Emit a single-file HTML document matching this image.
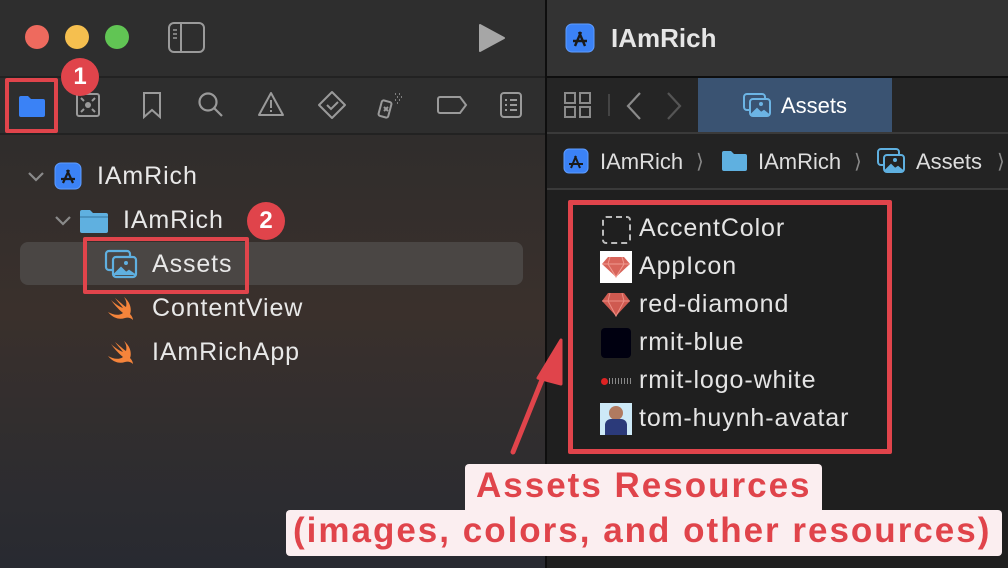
<!DOCTYPE html>
<html><head><meta charset="utf-8"><style>
*{margin:0;padding:0;box-sizing:border-box}
body{width:1008px;height:568px;overflow:hidden;position:relative;font-family:"Liberation Sans",sans-serif;background:#1f1f1f}
.abs{position:absolute}
#left{left:0;top:0;width:545px;height:568px;background:linear-gradient(180deg,#2f2e2e 0%,#302d2c 25%,#3a302c 55%,#2f2d2f 80%,#282a31 100%)}
.t{position:absolute;color:#e8e8e8;font-size:23px;white-space:nowrap}
.s{font-size:25px;letter-spacing:0.9px}
.sep{position:absolute;height:2px;background:#1c1c1c}
svg{position:absolute;overflow:visible}
</style></head><body>
<div id="left" class="abs"></div>
<div class="abs" style="left:0;top:0;width:545px;height:76px;background:#2e2e2e"></div>
<div class="sep" style="left:0;top:76px;width:545px;background:#222"></div>
<div class="abs" style="left:0;top:78px;width:545px;height:56px;background:#2e2e2e"></div>
<div class="sep" style="left:0;top:133px;width:545px;background:#222"></div>
<div class="abs" style="left:25px;top:25px;width:24px;height:24px;border-radius:50%;background:#ee6a5e"></div>
<div class="abs" style="left:65px;top:25px;width:24px;height:24px;border-radius:50%;background:#f5bf4f"></div>
<div class="abs" style="left:105px;top:25px;width:24px;height:24px;border-radius:50%;background:#61c554"></div>
<svg style="left:168px;top:22px" width="37" height="31"><rect x="1" y="1" width="35" height="29" rx="5" fill="none" stroke="#9a9a9a" stroke-width="2"/><line x1="13" y1="1" x2="13" y2="30" stroke="#9a9a9a" stroke-width="2"/><path d="M5 8h4M5 12h4M5 16h4" stroke="#9a9a9a" stroke-width="1.5"/></svg>
<svg style="left:478px;top:24px" width="28" height="28"><path d="M2 1L26 14L2 27Z" fill="#a6a6a6" stroke="#a6a6a6" stroke-linejoin="round" stroke-width="2"/></svg>
<svg style="left:19px;top:95px" width="26" height="22"><path d="M0 3a2 2 0 0 1 2-2h7l3 3h12a2 2 0 0 1 2 2v14a2 2 0 0 1-2 2H2a2 2 0 0 1-2-2Z" fill="#3a82f6"/></svg>
<svg style="left:76px;top:93px" width="24" height="24" fill="none" stroke="#9a9a9a" stroke-width="2"><rect x="1" y="1" width="22" height="22" rx="2"/><circle cx="12" cy="12" r="3" fill="#9a9a9a" stroke="none"/><path d="M5 5l3 3M19 5l-3 3M5 19l3-3M19 19l-3-3"/></svg>
<svg style="left:143px;top:92px" width="18" height="26" fill="none" stroke="#9a9a9a" stroke-width="2"><path d="M1 1h16v24l-8-7-8 7Z"/></svg>
<svg style="left:198px;top:92px" width="26" height="26" fill="none" stroke="#9a9a9a" stroke-width="2.2"><circle cx="10" cy="10" r="8.5"/><path d="M16 16l8 8"/></svg>
<svg style="left:258px;top:92px" width="26" height="24" fill="none" stroke="#9a9a9a" stroke-width="2"><path d="M13 1L25 23H1Z" stroke-linejoin="round"/><path d="M13 8v8M13 18v2"/></svg>
<svg style="left:318px;top:91px" width="28" height="28" fill="none" stroke="#9a9a9a" stroke-width="2"><path d="M14 1L27 14L14 27L1 14Z" stroke-linejoin="round"/><path d="M9 14l4 4 7-7"/></svg>
<svg style="left:378px;top:91px" width="26" height="28" fill="none" stroke="#9a9a9a" stroke-width="2"><rect x="2" y="10" width="10" height="16" rx="2" transform="rotate(15 7 18)"/><path d="M6 16l4 4M10 16l-4 4"/><path d="M17 3h1M21 3h1M19 6h1M23 6h1M17 9h1M21 9h1M19 12h1" stroke-width="1.5"/></svg>
<svg style="left:437px;top:96px" width="30" height="18" fill="none" stroke="#9a9a9a" stroke-width="2"><path d="M3 1h20l6 8-6 8H3a2 2 0 0 1-2-2V3a2 2 0 0 1 2-2Z"/></svg>
<svg style="left:500px;top:92px" width="22" height="26" fill="none" stroke="#9a9a9a" stroke-width="2"><rect x="1" y="1" width="20" height="24" rx="3"/><path d="M5 8h2M10 8h7M5 13h2M10 13h7M5 18h2M10 18h7"/></svg>
<div class="abs" style="left:5px;top:78px;width:53px;height:55px;border:4px solid #e0444b;border-radius:2px"></div>
<div class="abs" style="left:61px;top:58px;width:38px;height:38px;border-radius:50%;background:#e0444b;color:#fff;font-weight:bold;font-size:24px;text-align:center;line-height:38px">1</div>
<svg style="left:28px;top:172px" width="16" height="10" fill="none" stroke="#8a8a8a" stroke-width="2.2"><path d="M1 1l7 7 7-7"/></svg>
<svg style="left:54px;top:162px" width="28" height="28"><rect x="1" y="1" width="26" height="26" rx="6" fill="#3b82f6" stroke="#5e9cff"/><path d="M9 21L15 8M19 21L13 8M7 17h14" stroke="#1a1a1a" stroke-width="2.2" fill="none"/></svg>
<div class="t s" style="left:97px;top:162px">IAmRich</div>
<svg style="left:55px;top:216px" width="16" height="10" fill="none" stroke="#8a8a8a" stroke-width="2.2"><path d="M1 1l7 7 7-7"/></svg>
<svg style="left:80px;top:209px" width="28" height="24"><path d="M0 3a2 2 0 0 1 2-2h8l3 3h13a2 2 0 0 1 2 2v16a2 2 0 0 1-2 2H2a2 2 0 0 1-2-2Z" fill="#5fb0e0"/><rect x="0" y="7" width="28" height="2" fill="#4a93c0"/></svg>
<div class="t s" style="left:123px;top:206px">IAmRich</div>
<div class="abs" style="left:247px;top:202px;width:38px;height:38px;border-radius:50%;background:#e0444b;color:#fff;font-weight:bold;font-size:24px;text-align:center;line-height:38px">2</div>
<div class="abs" style="left:20px;top:242px;width:503px;height:43px;border-radius:8px;background:#4a4644"></div>
<svg style="left:105px;top:250px" width="32" height="28" fill="none" stroke="#5fb0e0" stroke-width="2.2"><rect x="1" y="1" width="24" height="19" rx="3"/><rect x="8" y="7" width="23" height="20" rx="3" fill="#4a4644"/><circle cx="21" cy="13" r="2" fill="#5fb0e0" stroke="none"/><path d="M9 25l7-7 5 5 3-2 6 4" fill="#5fb0e0"/></svg>
<div class="t s" style="left:152px;top:250px">Assets</div>
<div class="abs" style="left:83px;top:237px;width:166px;height:57px;border:4px solid #e0444b;border-radius:2px"></div>
<svg style="left:107px;top:295px" width="28" height="26"><path d="M17 2c6 5 8 12 6 17 3 3 3 6 3 6-2-2-5-3-8-2-6 2-12 0-17-6 5 3 11 4 15 1C11 14 6 8 4 5c4 4 9 7 12 8C13 9 10 6 8 3c5 4 8 7 11 9 1-4 0-7-2-10Z" fill="#f5843b"/></svg>
<div class="t s" style="left:152px;top:294px">ContentView</div>
<svg style="left:107px;top:339px" width="28" height="26"><path d="M17 2c6 5 8 12 6 17 3 3 3 6 3 6-2-2-5-3-8-2-6 2-12 0-17-6 5 3 11 4 15 1C11 14 6 8 4 5c4 4 9 7 12 8C13 9 10 6 8 3c5 4 8 7 11 9 1-4 0-7-2-10Z" fill="#f5843b"/></svg>
<div class="t s" style="left:152px;top:338px">IAmRichApp</div>
<div class="abs" style="left:545px;top:0;width:2px;height:568px;background:#0e0e0e"></div>
<div class="abs" style="left:547px;top:0;width:461px;height:76px;background:#333"></div>
<div class="abs" style="left:547px;top:76px;width:461px;height:2px;background:#0e0e0e"></div>
<div class="abs" style="left:547px;top:78px;width:461px;height:54px;background:#252525"></div>
<div class="abs" style="left:547px;top:132px;width:461px;height:2px;background:#3a3a3a"></div>
<div class="abs" style="left:547px;top:134px;width:461px;height:54px;background:#232323"></div>
<div class="abs" style="left:547px;top:188px;width:461px;height:2px;background:#3a3a3a"></div>
<div class="abs" style="left:547px;top:190px;width:461px;height:378px;background:#1f1f1f"></div>
<svg style="left:565px;top:23px" width="30" height="30"><rect x="1" y="1" width="28" height="28" rx="6" fill="#3b82f6" stroke="#5e9cff"/><path d="M10 23L16 9M20 23L14 9M8 18h14" stroke="#1a1a1a" stroke-width="2.4" fill="none"/></svg>
<div class="t" style="left:611px;top:23px;font-weight:bold;font-size:26px;color:#e6e6e6">IAmRich</div>
<svg style="left:564px;top:92px" width="28" height="27" fill="none" stroke="#8a8a8a" stroke-width="2"><rect x="1" y="1" width="10" height="10"/><rect x="16" y="1" width="10" height="10"/><rect x="1" y="15" width="10" height="10"/><rect x="16" y="15" width="10" height="10"/></svg>
<div class="abs" style="left:608px;top:94px;width:2px;height:22px;background:#444"></div>
<svg style="left:626px;top:92px" width="16" height="28" fill="none" stroke="#8a8a8a" stroke-width="2.2"><path d="M14 1L2 14l12 13"/></svg>
<svg style="left:666px;top:92px" width="16" height="28" fill="none" stroke="#555" stroke-width="2.2"><path d="M2 1l12 13L2 27"/></svg>
<div class="abs" style="left:698px;top:78px;width:194px;height:54px;background:#3a5372"></div>
<svg style="left:743px;top:93px" width="28" height="24" fill="none" stroke="#6cb4e4" stroke-width="2"><rect x="1" y="1" width="21" height="16" rx="3"/><rect x="7" y="6" width="20" height="17" rx="3" fill="#3a5372"/><circle cx="18" cy="11" r="2" fill="#6cb4e4" stroke="none"/><path d="M8 22l6-6 4 4 3-2 5 4" fill="#6cb4e4"/></svg>
<div class="t" style="left:781px;top:93px;font-size:22px;color:#fff">Assets</div>
<svg style="left:563px;top:148px" width="26" height="26"><rect x="1" y="1" width="24" height="24" rx="5" fill="#3b82f6" stroke="#5e9cff"/><path d="M8 20L13 8M17 20L12 8M6 16h14" stroke="#1a1a1a" stroke-width="2" fill="none"/></svg>
<div class="t" style="left:600px;top:149px;font-size:22px;color:#ddd">IAmRich</div>
<div class="t" style="left:696px;top:149px;font-size:20px;color:#888">⟩</div>
<svg style="left:722px;top:150px" width="25" height="21"><path d="M0 3a2 2 0 0 1 2-2h7l3 3h11a2 2 0 0 1 2 2v13a2 2 0 0 1-2 2H2a2 2 0 0 1-2-2Z" fill="#5fb0e0"/></svg>
<div class="t" style="left:758px;top:149px;font-size:22px;color:#ddd">IAmRich</div>
<div class="t" style="left:854px;top:149px;font-size:20px;color:#888">⟩</div>
<svg style="left:877px;top:148px" width="28" height="25" fill="none" stroke="#5fb0e0" stroke-width="2"><rect x="1" y="1" width="21" height="16" rx="3"/><rect x="7" y="7" width="20" height="17" rx="3" fill="#232323"/><circle cx="18" cy="12" r="2" fill="#5fb0e0" stroke="none"/><path d="M8 23l6-6 4 4 3-2 5 4" fill="#5fb0e0"/></svg>
<div class="t" style="left:916px;top:149px;font-size:22px;color:#ddd">Assets</div>
<div class="t" style="left:997px;top:149px;font-size:20px;color:#888">⟩</div>
<div class="abs" style="left:602px;top:216px;width:29px;height:28px;border:2px dashed #bbb;border-radius:4px"></div>
<div class="t s" style="left:639px;top:214px;color:#e4e4e4">AccentColor</div>
<div class="abs" style="left:600px;top:251px;width:32px;height:32px;background:#fff"></div>
<svg style="left:601px;top:256px" width="30" height="22"><path d="M7 1h16l6 7-14 13L1 8Z" fill="#d8645a"/><path d="M1 8h28M9 1l-2 7 8 13 8-13-2-7" stroke="#f09a90" fill="none" stroke-width="1"/></svg>
<div class="t s" style="left:639px;top:252px;color:#e4e4e4">AppIcon</div>
<svg style="left:601px;top:292px" width="30" height="25"><path d="M7 1h16l6 8-14 15L1 9Z" fill="#cf5a50"/><path d="M1 9h28M9 1l-2 8 8 15 8-15-2-8" stroke="#eb8d84" fill="none" stroke-width="1"/></svg>
<div class="t s" style="left:639px;top:290px;color:#e4e4e4">red-diamond</div>
<div class="abs" style="left:601px;top:328px;width:30px;height:30px;background:#000010;border-radius:4px"></div>
<div class="t s" style="left:639px;top:328px;color:#e4e4e4">rmit-blue</div>
<div class="abs" style="left:601px;top:378px;width:7px;height:7px;background:#d22;border-radius:50%"></div>
<div class="abs" style="left:609px;top:378px;width:22px;height:6px;background:repeating-linear-gradient(90deg,#888 0 1px,transparent 1px 3px)"></div>
<div class="t s" style="left:639px;top:366px;color:#e4e4e4">rmit-logo-white</div>
<div class="abs" style="left:600px;top:403px;width:32px;height:32px;background:#cde9f7"></div>
<div class="abs" style="left:609px;top:406px;width:14px;height:14px;background:#b07a60;border-radius:50%"></div>
<div class="abs" style="left:605px;top:419px;width:22px;height:16px;background:#2b3a7a;border-radius:6px 6px 0 0"></div>
<div class="t s" style="left:639px;top:404px;color:#e4e4e4">tom-huynh-avatar</div>
<div class="abs" style="left:568px;top:200px;width:324px;height:254px;border:5px solid #e0444b;border-radius:2px"></div>
<svg style="left:0;top:0" width="1008" height="568"><path d="M513 452L548 365" stroke="#e0444b" stroke-width="5" stroke-linecap="round"/><path d="M561 340L538 378 561 384Z" fill="#e0444b" stroke="#e0444b" stroke-width="3" stroke-linejoin="round"/></svg>
<div class="abs" style="left:465px;top:464px;width:357px;height:50px;background:#fbeef0;border-radius:4px"></div>
<div class="abs" style="left:286px;top:510px;width:716px;height:46px;background:#fbeef0;border-radius:4px"></div>
<div class="t" style="left:476px;top:466px;font-size:35px;font-weight:bold;letter-spacing:2px;color:#e0444b">Assets Resources</div>
<div class="t" style="left:293px;top:511px;font-size:35px;font-weight:bold;letter-spacing:2px;color:#e0444b">(images, colors, and other resources)</div>
</body></html>
